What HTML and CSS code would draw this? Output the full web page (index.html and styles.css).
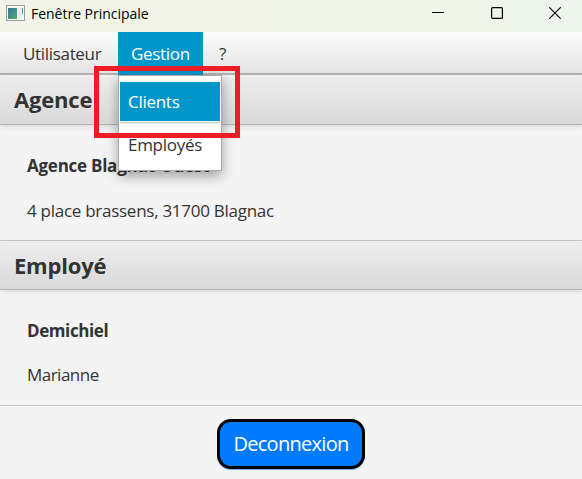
FILE: index.html
```html
<!DOCTYPE html>
<html lang="fr">
<head>
<meta charset="utf-8">
<title>Fenêtre Principale</title>
<link rel="stylesheet" href="styles.css">
</head>
<body>
<div class="window">
  <header class="titlebar">
    <svg class="app-icon" width="19" height="16" viewBox="0 0 19 16">
      <defs>
        <linearGradient id="pane" x1="0" y1="0" x2="1" y2="1"><stop offset="0" stop-color="#3d6fa6"/><stop offset="1" stop-color="#4fae62"/></linearGradient>
      </defs>
      <rect x=".5" y=".5" width="18" height="15" fill="#f8f8f8" stroke="#9b9b9b"/>
      <rect x="2" y="3" width="9" height="11" fill="url(#pane)"/>
      <rect x="12" y="3" width="4" height="11" fill="#e9eced"/>
      <path d="M16.5 3v6" stroke="#3c9b98"/>
    </svg>
    <span class="title">Fenêtre Principale</span>
    <div class="controls">
      <svg width="12" height="12" viewBox="0 0 12 12"><path d="M0 5.5h12" stroke="#000"/></svg>
      <svg width="12" height="12" viewBox="0 0 12 12"><rect x=".6" y=".6" width="10.8" height="10.8" rx="1" fill="none" stroke="#000" stroke-width="1.2"/></svg>
      <svg width="12" height="12" viewBox="0 0 12 12"><path d="M.3.3l11.4 11.4M11.7.3L.3 11.7" stroke="#000" stroke-width="1.1"/></svg>
    </div>
  </header>
  <nav class="menubar">
    <div class="menu user"><span>Utilisateur</span></div>
    <div class="menu open"><span>Gestion</span>
      <div class="popup">
        <div class="item selected"><span>Clients</span></div>
        <div class="separator"></div>
        <div class="item"><span>Employés</span></div>
      </div>
    </div>
    <div class="menu help"><span>?</span></div>
  </nav>
  <h2 class="section-title">Agence</h2>
  <section class="details">
    <p class="name agency">Agence Blagnac Ouest</p>
    <p class="address">4 place brassens, 31700 Blagnac</p>
  </section>
  <h2 class="section-title">Employé</h2>
  <section class="details">
    <p class="name">Demichiel</p>
    <p class="first-name">Marianne</p>
  </section>
  <footer class="actions"><button class="logout">Deconnexion</button></footer>
  <div class="highlight"></div>
</div>
</body>
</html>
```
FILE: styles.css
```css
* { box-sizing: border-box; }
body { margin: 0; font-family: "Open Sans", "Noto Sans", sans-serif; color: #333; }
.window { position: relative; width: 582px; height: 479px; overflow: hidden; background: #f4f4f4; font-size: 17px; }
.titlebar { height: 32px; display: flex; align-items: flex-start; padding: 5px 21px 0 6px; background: linear-gradient(90deg, #f2f4e7 0%, #f0f5e7 75%, #edf5ec 100%); color: #000; }
.title { font-size: 14px; line-height: 17px; margin-left: 6px; letter-spacing: -0.02px; }
.controls { margin-left: auto; display: flex; gap: 46.5px; padding-top: 2px; }
.controls svg { display: block; }
.menubar { height: 43px; display: flex; background: linear-gradient(#fdfdfd, #e3e3e3); border-bottom: 2px solid #b5b5b5; }
.menu { height: 43px; line-height: 43px; white-space: nowrap; }
.user { width: 118px; padding-left: 23px; letter-spacing: -0.32px; }
.open { position: relative; width: 85px; padding-left: 13px; background: #0096c9; color: #fff; letter-spacing: -0.3px; }
.help { padding-left: 16px; }
.popup { position: absolute; z-index: 2; left: 0; top: 43px; width: 104px; height: 96px; padding: 6px 1px 0; border: 1px solid #aaa; background: #fff; box-shadow: 0 5px 12px rgba(0,0,0,.34); color: #333; }
.item { height: 39px; line-height: 39px; padding-left: 8px; letter-spacing: -0.28px; }
.selected { background: #0096c9; color: #fff; }
.separator { height: 3px; margin-bottom: 1px; border-top: 1px solid #eee; border-bottom: 1px solid #eee; background: #ccc; }
.section-title { margin: 0; height: 50px; padding-left: 14px; font-size: 22px; line-height: 49px; font-weight: 700; letter-spacing: -0.2px; background: linear-gradient(#eeeeee, #d9d9d9); border-bottom: 1px solid #b3b3b3; box-shadow: 0 2px 5px rgba(0,0,0,.1); }
.details + .section-title { line-height: 48px; }
.details { height: 116px; padding: 28px 27px 0; border-bottom: 1px solid #c4c4c4; }
.section-title ~ .section-title { height: 49px; }
.details p { margin: 0; line-height: 25px; white-space: nowrap; letter-spacing: -0.4px; }
.details .name { font-weight: 700; margin-bottom: 20px; }
.details .agency { letter-spacing: -0.25px; }
.details .address { letter-spacing: -0.27px; }
.details .first-name { margin-top: -1px; letter-spacing: -0.52px; }
.actions { display: flex; justify-content: center; padding-top: 13px; }
.logout { width: 148px; height: 50px; padding: 0 0 2px; border: 3px solid #000; border-radius: 14px; background: #007bff; color: #fff; font: 20px "Open Sans", sans-serif; letter-spacing: -0.7px; box-shadow: 0 1px 0 #75b5fb; }
.highlight { position: absolute; z-index: 3; left: 94px; top: 66px; width: 146px; height: 72px; border: 5px solid #ee1c25; }
```
